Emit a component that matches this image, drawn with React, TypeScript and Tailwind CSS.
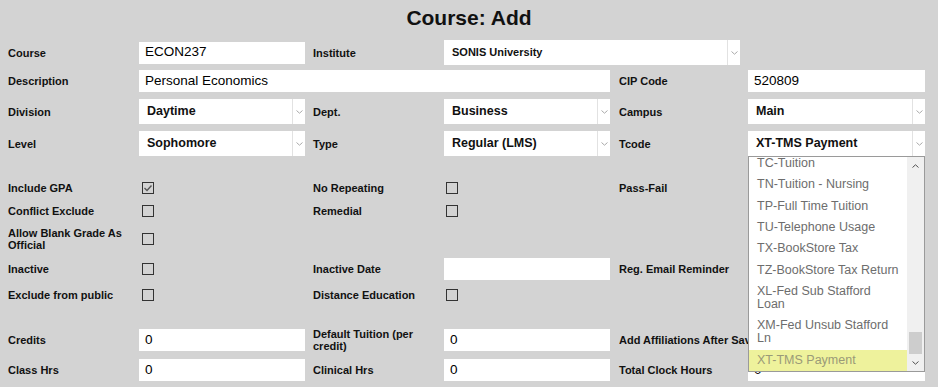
import React from "react";

const grid = "grid grid-cols-[131px_174px_131px_175px_129px_177px] items-center";
const labelCls = "text-[11px] leading-[12px] font-bold text-[#111] pr-3";

function Label({ children }: { children: React.ReactNode }) {
    return <div className={labelCls}>{children}</div>;
}

function TextInput({ value, width }: { value?: string; width: string }) {
    return (
        <div className={`${width} h-[22px] bg-white flex items-center pl-[6px] text-[13.5px] text-black`}>
            {value}
        </div>
    );
}

function Chevron({ className }: { className?: string }) {
    return (
        <svg width="7" height="4" viewBox="0 0 7 4" className={className}>
            <polyline points="0.5,0.5 3.5,3.2 6.5,0.5" fill="none" stroke="currentColor" strokeWidth="1" />
        </svg>
    );
}

function Select({ value, width, small }: { value: string; width: string; small?: boolean }) {
    return (
        <div className={`${width} h-[25px] bg-white flex items-stretch`}>
            <div className={`flex-1 flex items-center pl-[8px] font-bold text-[#111] ${small ? "text-[11px]" : "text-[12.5px]"}`}>
                {value}
            </div>
            <div className="w-[13px] border-l border-[#e2e2e2] flex items-center justify-center text-[#aaa]">
                <Chevron />
            </div>
        </div>
    );
}

function Checkbox({ checked, ml }: { checked?: boolean; ml: string }) {
    return (
        <div className={`${ml} w-[12px] h-[12px] border border-[#333] flex items-center justify-center`}>
            {checked && (
                <svg width="10" height="10" viewBox="0 0 10 10">
                    <polyline points="1.5,5 4,7.5 8.5,2.5" fill="none" stroke="#555" strokeWidth="1.4" />
                </svg>
            )}
        </div>
    );
}

const tcodes: { text: React.ReactNode; selected?: boolean }[] = [
    { text: "TC-Tuition" },
    { text: "TN-Tuition - Nursing" },
    { text: "TP-Full Time Tuition" },
    { text: "TU-Telephone Usage" },
    { text: "TX-BookStore Tax" },
    { text: "TZ-BookStore Tax Return" },
    { text: <>XL-Fed Sub Stafford<br />Loan</> },
    { text: <>XM-Fed Unsub Stafford<br />Ln</> },
    { text: "XT-TMS Payment", selected: true },
];

function TcodeDropdown() {
    return (
        <div className="absolute top-full left-0 z-10 w-[177px] h-[216px] bg-white border border-[#9a9a9a] flex">
            {/* options list, scrolled to the bottom */}
            <div className="flex-1 flex flex-col justify-end overflow-hidden">
                {tcodes.map((t, i) => (
                    <div
                        key={i}
                        className={`shrink-0 pl-[8px] py-[4.2px] text-[12.5px] leading-[13px] ${t.selected ? "bg-[#eef29c] text-[#9a9a78]" : "text-[#6d6d6d]"}`}
                    >
                        {t.text}
                    </div>
                ))}
            </div>
            {/* scrollbar */}
            <div className="w-[17px] bg-[#f0f0f0] flex flex-col">
                <div className="h-[17px] flex items-center justify-center text-[#505050]">
                    <Chevron className="rotate-180" />
                </div>
                <div className="flex-1" />
                <div className="h-[22px] mx-[2px] bg-[#cdcdcd]" />
                <div className="h-[17px] flex items-center justify-center text-[#505050]">
                    <Chevron />
                </div>
            </div>
        </div>
    );
}

export default function App() {
    return (
        <div className="w-[938px] h-[387px] bg-[#d3d3d3] overflow-hidden" style={{ fontFamily: '"Liberation Sans", Arial, sans-serif' }}>
            <div className="h-[36px] flex items-center justify-center text-[21px] font-bold text-[#111]">
                Course: Add
            </div>

            <div className="pl-2">
                {/* Course / Institute */}
                <div className={`${grid} mt-[4px] h-[22px]`}>
                    <Label>Course</Label>
                    <TextInput value="ECON237" width="w-[166px]" />
                    <Label>Institute</Label>
                    <div className="col-span-3">
                        <Select value="SONIS University" width="w-[296px]" small />
                    </div>
                </div>

                {/* Description / CIP */}
                <div className={`${grid} mt-[8px] h-[22px]`}>
                    <Label>Description</Label>
                    <div className="col-span-3">
                        <TextInput value="Personal Economics" width="w-[471px]" />
                    </div>
                    <Label>CIP Code</Label>
                    <TextInput value="520809" width="w-[177px]" />
                </div>

                {/* Division / Dept / Campus */}
                <div className={`${grid} mt-[7px] h-[25px]`}>
                    <Label>Division</Label>
                    <Select value="Daytime" width="w-[166px]" />
                    <Label>Dept.</Label>
                    <Select value="Business" width="w-[166px]" />
                    <Label>Campus</Label>
                    <Select value="Main" width="w-[177px]" />
                </div>

                {/* Level / Type / Tcode */}
                <div className={`${grid} mt-[7px] h-[25px]`}>
                    <Label>Level</Label>
                    <Select value="Sophomore" width="w-[166px]" />
                    <Label>Type</Label>
                    <Select value="Regular (LMS)" width="w-[166px]" />
                    <Label>Tcode</Label>
                    <div className="relative">
                        <Select value="XT-TMS Payment" width="w-[177px]" />
                        <TcodeDropdown />
                    </div>
                </div>

                <div className={`${grid} mt-[21px] h-[22px]`}>
                    <Label>Include GPA</Label>
                    <Checkbox checked ml="ml-[3px]" />
                    <Label>No Repeating</Label>
                    <Checkbox ml="ml-[2px]" />
                    <Label>Pass-Fail</Label>
                    <div />
                </div>

                <div className={`${grid} mt-[1px] h-[22px]`}>
                    <Label>Conflict Exclude</Label>
                    <Checkbox ml="ml-[3px]" />
                    <Label>Remedial</Label>
                    <Checkbox ml="ml-[2px]" />
                </div>

                <div className={`${grid} mt-[4px] h-[25px]`}>
                    <Label>Allow Blank Grade As Official</Label>
                    <Checkbox ml="ml-[3px]" />
                </div>

                <div className={`${grid} mt-[7px] h-[22px]`}>
                    <Label>Inactive</Label>
                    <Checkbox ml="ml-[3px]" />
                    <Label>Inactive Date</Label>
                    <TextInput width="w-[166px]" />
                    <Label>Reg. Email Reminder</Label>
                </div>

                <div className={`${grid} mt-[4px] h-[22px]`}>
                    <Label>Exclude from public</Label>
                    <Checkbox ml="ml-[3px]" />
                    <Label>Distance Education</Label>
                    <Checkbox ml="ml-[2px]" />
                </div>

                <div className={`${grid} mt-[22px] h-[22px]`}>
                    <Label>Credits</Label>
                    <TextInput value="0" width="w-[166px]" />
                    <Label>Default Tuition (per credit)</Label>
                    <TextInput value="0" width="w-[166px]" />
                    {/* label runs under the open Tcode list; clipped at the list edge */}
                    <div className="overflow-hidden text-[11px] leading-[12px] font-bold text-[#111] whitespace-nowrap">Add Affiliations After Saving</div>
                </div>

                <div className={`${grid} mt-[9px] h-[22px]`}>
                    <Label>Class Hrs</Label>
                    <TextInput value="0" width="w-[166px]" />
                    <Label>Clinical Hrs</Label>
                    <TextInput value="0" width="w-[166px]" />
                    <Label>Total Clock Hours</Label>
                    <TextInput value="0" width="w-[177px]" />
                </div>
            </div>
        </div>
    );
}
